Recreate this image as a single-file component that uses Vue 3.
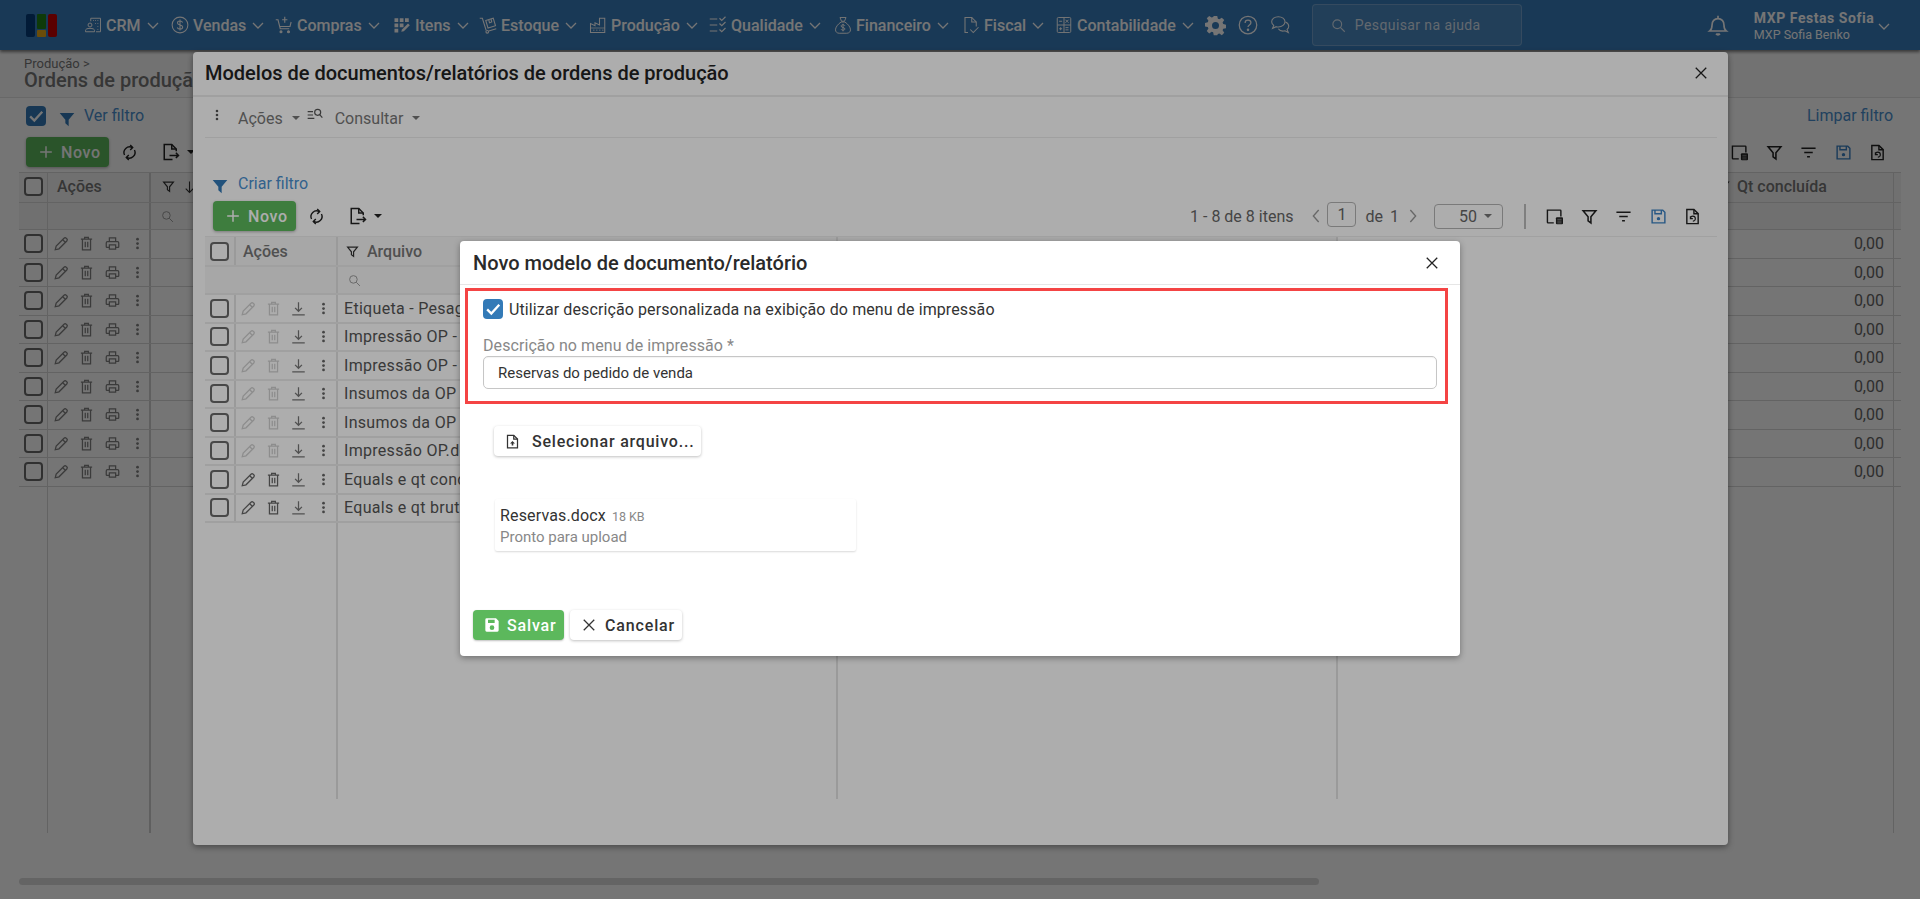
<script setup>
const nav = [
  { label: 'CRM', icon: 'i-crm', w: 87 },
  { label: 'Vendas', icon: 'i-dollar', w: 104 },
  { label: 'Compras', icon: 'i-cart', w: 118 },
  { label: 'Itens', icon: 'i-items', w: 86 },
  { label: 'Estoque', icon: 'i-stock', w: 110 },
  { label: 'Produção', icon: 'i-factory', w: 120 },
  { label: 'Qualidade', icon: 'i-quality', w: 125 },
  { label: 'Financeiro', icon: 'i-bag', w: 128 },
  { label: 'Fiscal', icon: 'i-fiscal', w: 93 },
  { label: 'Contabilidade', icon: 'i-calc', w: 0 }
]
const backRows = Array.from({ length: 9 }, (_, i) => i)
const files = [
  { name: 'Etiqueta - Pesagem', off: true },
  { name: 'Impressão OP - Lote', off: true },
  { name: 'Impressão OP - Ordem', off: true },
  { name: 'Insumos da OP - Lote', off: true },
  { name: 'Insumos da OP - Ordem', off: true },
  { name: 'Impressão OP.docx', off: true },
  { name: 'Equals e qt concluída', off: false },
  { name: 'Equals e qt bruta', off: false }
]
const rightIcons = ['i-columns', 'i-funnel-o', 'i-sort', 'i-save-o', 'i-restore']
</script>

<template>
  <div class="app">
    <svg class="sprite" width="0" height="0" aria-hidden="true">
      <symbol id="i-crm" viewBox="0 0 24 24"><g fill="none" stroke="currentColor" stroke-width="1.3"><circle cx="8" cy="12" r="2.6"/><path d="M2 21v-1.5c0-2 2-3 6-3s6 1 6 3V21z"/><path d="M9 7V3h13v18h-6"/><path d="M12 6h1M15 6h1M18 6h1M15 10h1M18 10h1M18 14h1M18 18h1"/></g></symbol>
      <symbol id="i-dollar" viewBox="0 0 24 24"><g fill="none" stroke="currentColor" stroke-width="1.4"><circle cx="12" cy="12" r="10.5"/><path d="M15.5 8.6c-.6-1.3-1.8-2-3.5-2-2 0-3.4 1-3.4 2.6 0 3.6 7 1.8 7 5.5 0 1.6-1.5 2.7-3.6 2.7-1.8 0-3.1-.8-3.7-2.1M12 4.6v14.8"/></g></symbol>
      <symbol id="i-cart" viewBox="0 0 24 24"><g fill="none" stroke="currentColor" stroke-width="1.5"><path d="M1 5h3l3 12h12M6 14h14l1.5-6"/><path d="M13 1v8M9.5 5h7"/><circle cx="8" cy="21" r="1.3" fill="currentColor"/><circle cx="18" cy="21" r="1.3" fill="currentColor"/></g></symbol>
      <symbol id="i-items" viewBox="0 0 24 24"><g fill="currentColor"><rect x="2" y="3" width="5" height="5"/><rect x="9" y="3" width="5" height="5"/><rect x="16" y="3" width="5" height="5"/><rect x="2" y="10" width="5" height="5"/><rect x="9" y="10" width="5" height="5"/><rect x="2" y="17" width="5" height="5"/><path d="M11 21l1-3 8-8 2.4 2.4-8 8z"/></g></symbol>
      <symbol id="i-stock" viewBox="0 0 24 24"><g fill="none" stroke="currentColor" stroke-width="1.4"><path d="M1 3h3.500l5 16"/><circle cx="11" cy="21" r="1.800"/><path d="M13 20l10-3"/><path d="M9 6l10-3 3 10-10 3z"/><path d="M13 5l1 4 3-1-1-4"/></g></symbol>
      <symbol id="i-factory" viewBox="0 0 24 24"><g fill="none" stroke="currentColor" stroke-width="1.400"><path d="M2 22V10l6 3V9l6 3V3h7v19z"/><path d="M2 16h19" stroke-width="1"/><path d="M6 19h1M10 19h1M14 19h1M18 19h1" stroke-width="2"/></g></symbol>
      <symbol id="i-quality" viewBox="0 0 24 24"><g fill="none" stroke="currentColor" stroke-width="1.500"><path d="M1 4h10M1 12h10M1 20h10"/><path d="M14 3l3 3 5-5M14 10l3 3 5-5M14 18l3 3 5-5"/></g></symbol>
      <symbol id="i-bag" viewBox="0 0 24 24"><g fill="none" stroke="currentColor" stroke-width="1.300"><path d="M8 2h8l-2 5h-4z"/><path d="M9.500 8h5"/><path d="M9.500 8C5 11 2 15 2 18.500 2 21 4 23 7 23h10c3 0 5-2 5-4.500C22 15 19 11 14.500 8"/><path d="M14.500 13c-.5-1-1.500-1.400-2.500-1.400-1.500 0-2.500.7-2.500 1.800 0 2.500 5 1.400 5 3.800 0 1.100-1 1.800-2.500 1.800-1.200 0-2.200-.5-2.600-1.400M12 10.500v10"/></g></symbol>
      <symbol id="i-fiscal" viewBox="0 0 24 24"><g fill="none" stroke="currentColor" stroke-width="1.400"><path d="M8 22H4V2h9l6 6v6"/><path d="M13 2v6h6"/><path d="M11 18l4 4 7-7"/></g></symbol>
      <symbol id="i-calc" viewBox="0 0 24 24"><g fill="none" stroke="currentColor" stroke-width="1.300"><rect x="3" y="2" width="18" height="20" rx="1.500"/><path d="M12 2v20M3 12h18"/><path d="M5.500 7h4M14 5l4 4M18 5l-4 4M5.500 17h4M7.500 15v4M14 15.500h4M14 18.500h4"/></g></symbol>
      <symbol id="i-gear" viewBox="0 0 24 24"><path fill="currentColor" fill-rule="evenodd" d="M10 1h4l.7 3.200 1.700.7L19.200 3l2.800 2.800-1.900 2.800.7 1.700 3.200.7v4l-3.200.7-.7 1.700 1.900 2.800-2.800 2.800-2.800-1.900-1.700.7L14 23h-4l-.7-3.200-1.700-.7L4.800 21 2 18.200l1.900-2.800-.7-1.700L0 13V9l3.200-.7.7-1.700L2 3.800 4.800 1l2.800 1.900 1.700-.7zM12 8a4 4 0 1 0 0 8 4 4 0 0 0 0-8z"/></symbol>
      <symbol id="i-help" viewBox="0 0 24 24"><g fill="none" stroke="currentColor" stroke-width="1.500"><circle cx="12" cy="12" r="10.500"/><path d="M8.500 9.500c0-2 1.500-3.300 3.500-3.300s3.500 1.300 3.500 3c0 2.800-3.500 2.600-3.500 5.300"/><circle cx="12" cy="17.800" r=".8" fill="currentColor"/></g></symbol>
      <symbol id="i-chat" viewBox="0 0 24 24"><g fill="none" stroke="currentColor" stroke-width="1.300"><path d="M10 2c-4.500 0-8 2.700-8 6 0 1.800 1 3.300 2.500 4.400L3 16l4.500-2c.8.200 1.600.3 2.500.3 4.500 0 8-2.800 8-6.300s-3.500-6-8-6z"/><path d="M18.500 8.500c2.500 1 4 2.800 4 5 0 1.500-.8 2.900-2 3.900L22 21l-4-2c-3 .7-6.500-.2-8-2.500"/></g></symbol>
      <symbol id="i-search" viewBox="0 0 24 24"><g fill="none" stroke="currentColor" stroke-width="1.800"><circle cx="10" cy="10" r="7"/><path d="M15.300 15.300L22 22"/></g></symbol>
      <symbol id="i-bell" viewBox="0 0 24 24"><g fill="none" stroke="currentColor" stroke-width="1.800"><path d="M3 18.500h18c-2-1.500-2.500-3-2.500-6.500 0-4-2.500-7-6.500-7s-6.500 3-6.500 7c0 3.500-.5 5-2.500 6.500z"/><path d="M12 2v3"/><path d="M10 21.500c.5.700 1.200 1 2 1s1.500-.3 2-1" stroke-width="2.200"/></g></symbol>
      <symbol id="i-chev" viewBox="0 0 14 14"><path d="M2 5l5 5 5-5" fill="none" stroke="currentColor" stroke-width="1.300"/></symbol>
      <symbol id="i-funnel" viewBox="0 0 24 24"><path fill="currentColor" d="M1 3h22l-8.500 10v10L9.500 18.500V13z"/></symbol>
      <symbol id="i-funnel-o" viewBox="0 0 24 24"><path fill="none" stroke="currentColor" stroke-width="2.200" d="M3 4h18l-7 8.500V21l-4-3v-5.500z"/></symbol>
      <symbol id="i-kebab" viewBox="0 0 24 24"><g fill="currentColor"><circle cx="12" cy="5" r="2.200"/><circle cx="12" cy="12" r="2.200"/><circle cx="12" cy="19" r="2.200"/></g></symbol>
      <symbol id="i-consult" viewBox="0 0 24 24"><g fill="none" stroke="currentColor" stroke-width="1.800"><path d="M1 7h8M1 12h8M1 17h10"/><circle cx="16" cy="8" r="4.500"/><path d="M19 11.500l4 4.500"/></g></symbol>
      <symbol id="i-refresh" viewBox="0 0 24 24"><g fill="none" stroke="currentColor" stroke-width="2"><path d="M5 15.500A8 8 0 0 1 16 5"/><path d="M19 8.500A8 8 0 0 1 8 19"/><path d="M13 1.500l3.500 3.500L13 8.500M11 15.500L7.500 19l3.500 3.500"/></g></symbol>
      <symbol id="i-export" viewBox="0 0 24 24"><g fill="none" stroke="currentColor" stroke-width="2"><path d="M14 22H3V2h10l6 6v3"/><path d="M13 2v6h6"/><path d="M10 16.500h12M18.500 13l3.500 3.500-3.500 3.500"/></g></symbol>
      <symbol id="i-columns" viewBox="0 0 24 24"><g fill="none" stroke="currentColor" stroke-width="2"><path d="M11 21H3a1 1 0 0 1-1-1V3h18a1 1 0 0 1 1 1v8"/></g><rect x="14" y="13" width="10" height="10" rx="1.500" fill="currentColor"/><path d="M16 16h6M16 18.500h6M16 21h6" stroke="#a5a5a5" stroke-width="1"/></symbol>
      <symbol id="i-sort" viewBox="0 0 24 24"><g fill="none" stroke="currentColor" stroke-width="2.200"><path d="M2 6h20M6 12h12M10 18h4"/></g></symbol>
      <symbol id="i-save-o" viewBox="0 0 24 24"><path fill="none" stroke="currentColor" stroke-width="2" d="M3 3h15l3 3v15H3zM7 3v5h9V3"/><circle cx="12" cy="15" r="2.400" fill="currentColor"/></symbol>
      <symbol id="i-save" viewBox="0 0 24 24"><path fill="currentColor" fill-rule="evenodd" d="M2 4a2 2 0 0 1 2-2h14l4 4v14a2 2 0 0 1-2 2H4a2 2 0 0 1-2-2zM6 4v5h10V4zM12 12.500a3.500 3.500 0 1 0 0 7 3.500 3.500 0 0 0 0-7z"/></symbol>
      <symbol id="i-restore" viewBox="0 0 24 24"><g fill="none" stroke="currentColor" stroke-width="2"><path d="M4 2h10l6 6v14H4z"/><path d="M14 2v6h6"/><path d="M9 15a3.500 3.500 0 1 1 3.500 3.500M9 11.500V15h3.500" stroke-width="1.600"/></g></symbol>
      <symbol id="i-pencil" viewBox="0 0 24 24"><g fill="none" stroke="currentColor" stroke-width="2"><path d="M2 22l1.500-6L16 3.500a2.500 2.500 0 0 1 3.500 0l1 1a2.500 2.500 0 0 1 0 3.500L8 20.500z"/><path d="M14 6l4.500 4.500"/></g></symbol>
      <symbol id="i-trash" viewBox="0 0 24 24"><g fill="none" stroke="currentColor" stroke-width="2"><path d="M3 5h18M9 5V2h6v3M5.500 5v17h13V5"/><path d="M10 9v9M14 9v9"/></g></symbol>
      <symbol id="i-print" viewBox="0 0 24 24"><g fill="none" stroke="currentColor" stroke-width="2"><path d="M7 9V3h10v6"/><path d="M7 18H3a1 1 0 0 1-1-1v-6a2 2 0 0 1 2-2h16a2 2 0 0 1 2 2v6a1 1 0 0 1-1 1h-4"/><path d="M7 14h10v7H7z"/></g></symbol>
      <symbol id="i-download" viewBox="0 0 24 24"><g fill="none" stroke="currentColor" stroke-width="2"><path d="M12 2v14M6.500 11l5.500 5.500 5.500-5.500M2 22h20"/></g></symbol>
      <symbol id="i-arrow-down" viewBox="0 0 24 24"><path d="M12 2v20M5 15l7 7 7-7" fill="none" stroke="currentColor" stroke-width="2"/></symbol>
      <symbol id="i-close" viewBox="0 0 24 24"><path d="M3 3l18 18M21 3L3 21" fill="none" stroke="currentColor" stroke-width="2.200"/></symbol>
      <symbol id="i-left" viewBox="0 0 14 24"><path d="M11 3L3 12l8 9" fill="none" stroke="currentColor" stroke-width="2"/></symbol>
      <symbol id="i-right" viewBox="0 0 14 24"><path d="M3 3l8 9-8 9" fill="none" stroke="currentColor" stroke-width="2"/></symbol>
      <symbol id="i-plus" viewBox="0 0 24 24"><path d="M12 2v20M2 12h20" fill="none" stroke="currentColor" stroke-width="2.600"/></symbol>
      <symbol id="i-upload" viewBox="0 0 24 24"><g fill="none" stroke="currentColor" stroke-width="2"><path d="M4 2h10l6 6v14H4z"/><path d="M14 2v6h6"/></g><path d="M12 11l-4 4h2.700v3.500h2.600V15H16z" fill="currentColor"/></symbol>
      <symbol id="i-check" viewBox="0 0 24 24"><path d="M5 12.500l5 5L19.500 7" fill="none" stroke="currentColor" stroke-width="2.800"/></symbol>
    </svg>

    <header class="topbar">
      <div class="logo">
        <span class="bar navy"></span>
        <span class="bar stacked"><i class="green"></i><i class="gold"></i></span>
        <span class="bar red"></span>
      </div>
      <nav class="nav">
        <a v-for="n in nav" :key="n.label" class="nav-item" :style="n.w ? { width: n.w + 'px' } : null">
          <svg class="nav-icon"><use :href="'#' + n.icon" /></svg>
          <span>{{ n.label }}</span>
          <svg class="nav-chev"><use href="#i-chev" /></svg>
        </a>
      </nav>
      <div class="nav-tools">
        <svg class="tool gear"><use href="#i-gear" /></svg>
        <svg class="tool"><use href="#i-help" /></svg>
        <svg class="tool"><use href="#i-chat" /></svg>
      </div>
      <div class="help-search">
        <svg class="help-search-icon"><use href="#i-search" /></svg>
        <span>Pesquisar na ajuda</span>
      </div>
      <svg class="bell"><use href="#i-bell" /></svg>
      <div class="user">
        <strong>MXP Festas Sofia</strong>
        <span>MXP Sofia Benko</span>
      </div>
      <svg class="user-chev"><use href="#i-chev" /></svg>
    </header>

    <section class="page-head">
      <div class="crumb">Produção &gt;</div>
      <h1>Ordens de produção</h1>
    </section>

    <section class="filter-line">
      <span class="check on"><svg><use href="#i-check" /></svg></span>
      <svg class="funnel"><use href="#i-funnel" /></svg>
      <a class="link">Ver filtro</a>
      <a class="link right">Limpar filtro</a>
    </section>

    <section class="actions back-actions">
      <button class="btn-new"><svg><use href="#i-plus" /></svg>Novo</button>
      <svg class="act-icon refresh"><use href="#i-refresh" /></svg>
      <svg class="act-icon export"><use href="#i-export" /></svg>
      <i class="caret dark"></i>
      <div class="right-icons">
        <svg v-for="ic in rightIcons" :key="ic" class="act-icon" :class="{ blue: ic === 'i-save-o' }"><use :href="'#' + ic" /></svg>
      </div>
    </section>

    <section class="back-table">
      <div class="brow head">
        <div class="cell"><span class="check"></span></div>
        <div class="cell title-cell">Ações</div>
        <div class="cell icons-cell"><svg class="mini"><use href="#i-funnel-o" /></svg><svg class="mini arrow"><use href="#i-arrow-down" /></svg></div>
        <div class="cell qt"><svg class="mini"><use href="#i-funnel-o" /></svg><span>Qt concluída</span></div>
        <div class="cell"></div>
      </div>
      <div class="brow filter">
        <div class="cell"></div>
        <div class="cell"></div>
        <div class="cell"><svg class="mini search"><use href="#i-search" /></svg></div>
        <div class="cell"></div>
        <div class="cell"></div>
      </div>
      <div v-for="r in backRows" :key="r" class="brow item">
        <div class="cell"><span class="check"></span></div>
        <div class="cell row-icons">
          <svg><use href="#i-pencil" /></svg>
          <svg><use href="#i-trash" /></svg>
          <svg><use href="#i-print" /></svg>
          <svg><use href="#i-kebab" /></svg>
        </div>
        <div class="cell"></div>
        <div class="cell num">0,00</div>
        <div class="cell"></div>
      </div>
      <div class="brow fill">
        <div class="cell"></div>
        <div class="cell"></div>
        <div class="cell"></div>
        <div class="cell"></div>
        <div class="cell"></div>
      </div>
    </section>

    <div class="scrollbar"></div>

    <div class="scrim"></div>

    <section class="modal">
      <header class="modal-head">
        <h2>Modelos de documentos/relatórios de ordens de produção</h2>
        <svg class="close"><use href="#i-close" /></svg>
      </header>
      <div class="modal-body">
        <div class="menu-line">
          <svg class="menu-kebab"><use href="#i-kebab" /></svg>
          <span class="menu-text acoes">Ações</span><i class="caret wide"></i>
          <svg class="menu-consult"><use href="#i-consult" /></svg>
          <span class="menu-text consult">Consultar</span><i class="caret wide"></i>
        </div>
        <div class="create-filter">
          <svg class="funnel"><use href="#i-funnel" /></svg>
          <a class="link">Criar filtro</a>
        </div>
        <div class="actions modal-actions">
          <button class="btn-new"><svg><use href="#i-plus" /></svg>Novo</button>
          <svg class="act-icon refresh"><use href="#i-refresh" /></svg>
          <svg class="act-icon export"><use href="#i-export" /></svg>
          <i class="caret dark"></i>
          <div class="pager">
            <span class="count">1 - 8 de 8 itens</span>
            <svg class="pg-chev"><use href="#i-left" /></svg>
            <span class="pg-input">1</span>
            <span class="pg-de">de</span>
            <span class="pg-total">1</span>
            <svg class="pg-chev"><use href="#i-right" /></svg>
            <span class="pg-select"><span>50</span><i class="caret"></i></span>
            <span class="pg-sep"></span>
          </div>
          <div class="right-icons">
            <svg v-for="ic in rightIcons" :key="ic" class="act-icon" :class="{ blue: ic === 'i-save-o' }"><use :href="'#' + ic" /></svg>
          </div>
        </div>
        <div class="modal-table">
          <div class="mrow head">
            <div class="cell"><span class="check"></span></div>
            <div class="cell title-cell">Ações</div>
            <div class="cell icons-cell"><svg class="mini"><use href="#i-funnel-o" /></svg><span class="arquivo">Arquivo</span></div>
            <div class="cell"></div>
          </div>
          <div class="mrow filter">
            <div class="cell"></div>
            <div class="cell"></div>
            <div class="cell"><svg class="mini search"><use href="#i-search" /></svg></div>
            <div class="cell"></div>
          </div>
          <div v-for="f in files" :key="f.name" class="mrow item">
            <div class="cell"><span class="check"></span></div>
            <div class="cell row-icons">
              <svg :class="{ off: f.off }"><use href="#i-pencil" /></svg>
              <svg :class="{ off: f.off }"><use href="#i-trash" /></svg>
              <svg class="strong"><use href="#i-download" /></svg>
              <svg><use href="#i-kebab" /></svg>
            </div>
            <div class="cell file">{{ f.name }}</div>
            <div class="cell"></div>
          </div>
          <div class="mrow fill">
            <div class="cell"></div>
            <div class="cell"></div>
            <div class="cell"></div>
            <div class="cell"></div>
          </div>
        </div>
      </div>
    </section>

    <div class="scrim"></div>

    <section class="dialog">
      <header class="dialog-head">
        <h3>Novo modelo de documento/relatório</h3>
        <svg class="close"><use href="#i-close" /></svg>
      </header>
      <div class="dialog-body">
        <label class="custom-line">
          <span class="check on"><svg><use href="#i-check" /></svg></span>
          <span>Utilizar descrição personalizada na exibição do menu de impressão</span>
        </label>
        <div class="field-label">Descrição no menu de impressão *</div>
        <div class="field-input">Reservas do pedido de venda</div>
        <button class="btn-select"><svg><use href="#i-upload" /></svg>Selecionar arquivo...</button>
        <div class="file-card">
          <div><span class="file-name">Reservas.docx</span><span class="file-size">18 KB</span></div>
          <div class="file-state">Pronto para upload</div>
        </div>
      </div>
      <footer class="dialog-foot">
        <button class="btn-save"><svg><use href="#i-save" /></svg>Salvar</button>
        <button class="btn-cancel"><svg><use href="#i-close" /></svg>Cancelar</button>
      </footer>
      <div class="highlight"></div>
    </section>
  </div>
</template>

<style>
html, body { margin: 0; padding: 0; background: #fff; }
</style>

<style scoped>
.app {
  position: relative;
  width: 1920px;
  height: 899px;
  overflow: hidden;
  background: #fff;
  color: #666;
  font-family: Roboto, "Liberation Sans", sans-serif;
  font-size: 16px;
}
.sprite { position: absolute; }
h1, h2, h3 { margin: 0; font-weight: 500; }
button { font-family: inherit; border: 0; padding: 0; cursor: pointer; }

/* top bar */
.topbar {
  display: flex;
  align-items: center;
  height: 50px;
  padding-left: 26px;
  background: #387dbc;
  color: #fff;
  box-shadow: 0 2px 3px rgba(0, 0, 0, .5);
  position: relative;
}
.logo { display: flex; gap: 2px; width: 31px; height: 23px; margin-right: 27px; margin-top: 1px; }
.bar { width: 9px; border-radius: 2px; display: flex; flex-direction: column; gap: 1px; }
.navy { background: #053d79; }
.red { background: #c80000; }
.stacked i { display: block; border-radius: 1px; }
.green { height: 15px; background: #207f15; }
.gold { height: 7px; background: #e8a515; }
.nav { display: flex; align-items: center; }
.nav-item { display: flex; align-items: center; font-weight: 500; white-space: nowrap; }
.nav-icon { width: 18px; height: 18px; margin-right: 4px; flex: none; }
.nav-chev { width: 14px; height: 14px; margin-left: 5px; flex: none; }
.nav-tools { display: flex; align-items: center; gap: 12px; margin-left: 10px; }
.tool { width: 20px; height: 20px; }
.gear { width: 21px; height: 21px; }
.help-search {
  display: flex;
  align-items: center;
  box-sizing: border-box;
  width: 210px;
  height: 42px;
  margin-left: 22px;
  padding-left: 18px;
  border: 1px solid rgba(255, 255, 255, .22);
  border-radius: 4px;
  background: rgba(255, 255, 255, .1);
  color: rgba(255, 255, 255, .78);
  font-size: 14px;
  letter-spacing: .4px;
}
.help-search-icon { width: 15px; height: 15px; margin-right: 9px; }
.bell { width: 22px; height: 24px; margin-left: 185px; }
.user { display: flex; flex-direction: column; margin-left: 25px; margin-top: 3px; }
.user strong { font-size: 14px; line-height: 15px; font-weight: 700; letter-spacing: .55px; }
.user span { font-size: 12.500px; line-height: 17px; }
.user-chev { width: 14px; height: 14px; margin-left: 3px; margin-top: 2px; }

/* page */
.page-head {
  box-sizing: border-box;
  height: 48px;
  padding: 6px 0 0 24px;
  border-bottom: 1px solid #e3e3e3;
  background: #fafafa;
}
.crumb { font-size: 13px; line-height: 15px; color: #777; }
h1 { font-size: 20px; line-height: 18px; color: #777; }
.filter-line { display: flex; align-items: center; height: 32px; padding: 4px 27px 0 26px; box-sizing: border-box; }
.check {
  display: inline-block;
  box-sizing: border-box;
  width: 19px;
  height: 19px;
  border: 2px solid #6b6b6b;
  border-radius: 4px;
  background: #fff;
  flex: none;
}
.check.on { width: 20px; height: 20px; border: 0; background: #337ab7; color: #fff; display: flex; }
.check.on svg { width: 20px; height: 20px; }
.funnel { width: 16px; height: 16px; color: #337ab7; }
.filter-line .funnel { margin: 6px 0 0 13px; }
.link { color: #4a90cf; font-size: 16px; white-space: nowrap; }
.filter-line .link { margin: -1px 0 0 9px; }
.filter-line .link.right { margin-left: auto; }

.actions { display: flex; align-items: center; height: 30px; }
.back-actions { margin: 7px 0 0 26px; padding-right: 34px; }
.btn-new {
  display: flex;
  align-items: center;
  box-sizing: border-box;
  width: 83px;
  height: 30px;
  padding-left: 13px;
  border-radius: 4px;
  background: #5cb85c;
  color: #fff;
  font-size: 16px;
  font-weight: 500;
  letter-spacing: .6px;
  box-shadow: 0 1px 3px rgba(0, 0, 0, .3);
  flex: none;
}
.btn-new svg { width: 14px; height: 14px; margin-right: 8px; }
.act-icon { width: 17px; height: 17px; color: #222; flex: none; }
.refresh { margin-left: 12px; }
.export { margin-left: 24px; width: 18px; height: 18px; }
.caret {
  display: inline-block;
  width: 0;
  height: 0;
  margin-left: 7px;
  border: 4px solid transparent;
  border-top-color: #777;
  border-bottom: 0;
  flex: none;
}
.caret.dark { border-top-color: #222; }
.caret.wide { margin-left: 9px; }
.right-icons { display: flex; gap: 17.500px; margin-left: auto; }
.blue { color: #3b82c4; }

/* back table */
.back-table { margin: 5px 19px 0 19px; display: flex; flex-direction: column; height: 660px; border-top: 1px solid #d8d8d8; }
.brow { display: grid; grid-template-columns: 29px 102px 1550px 194px 7px; box-sizing: border-box; border-bottom: 1px solid #d8d8d8; }
.brow .cell { border-right: 1px solid #d8d8d8; display: flex; align-items: center; box-sizing: border-box; }
.brow .cell:nth-child(2) { border-right: 1px solid #d0d0d0; }
.brow .cell:nth-child(3) { border-right: 0; border-left: 1px solid #cfcfcf; }
.brow .cell:nth-child(5) { border-right: 0; }
.brow .cell:first-child { padding-left: 5px; }
.brow.head { height: 30px; background: #f5f5f5; }
.brow.head .cell { padding-bottom: 2px; }
.brow.filter { height: 27px; background: #f5f5f5; }
.brow.item { height: 28.500px; }
.brow.fill { flex: 1; border-bottom: 0; }
.title-cell { padding-left: 9px; font-weight: 500; color: #777; }
.icons-cell { padding-left: 11px; }
.mini { width: 13px; height: 13px; color: #333; flex: none; }
.mini.search { margin-left: 10px; color: #999; }
.mini.arrow { margin-left: 8px; height: 16px; }
.brow .qt { padding-left: 17px; font-weight: 500; color: #777; }
.brow .qt .mini { margin-right: 7px; }
.num { justify-content: flex-end; padding-right: 9px; color: #666; }
.row-icons { gap: 10.300px; padding-left: 6px; }
.row-icons svg { width: 15px; height: 15px; color: #808080; flex: none; }

.scrollbar { position: absolute; left: 19px; top: 878px; width: 1300px; height: 7px; border-radius: 4px; background: #dbdbdb; }
.scrim { position: absolute; inset: 0; background: rgba(0, 0, 0, .32); }

/* modal */
.modal {
  position: absolute;
  left: 193px;
  top: 52px;
  box-sizing: border-box;
  width: 1535px;
  height: 793px;
  border-radius: 4px;
  background: #fff;
  box-shadow: 0 2px 6px rgba(0, 0, 0, .4);
  color: #555;
}
.modal-head {
  display: flex;
  align-items: center;
  justify-content: space-between;
  box-sizing: border-box;
  height: 45px;
  padding: 0 20px 2px 12px;
  border-bottom: 2px solid #ececec;
}
h2 { font-size: 20px; color: #222; }
.close { width: 14px; height: 14px; color: #222; flex: none; }
.modal-body { padding: 0 11px 0 12px; }
.menu-line {
  display: flex;
  align-items: center;
  height: 41px;
  padding-top: 2px;
  box-sizing: border-box;
  border-bottom: 1px solid #ececec;
  color: #777;
}
.menu-kebab { width: 14px; height: 14px; margin: -7px 0 0 5px; color: #555; }
.menu-text { font-size: 16px; }
.acoes { margin-left: 14px; }
.menu-consult { width: 16px; height: 16px; margin: -7px 0 0 7px; color: #555; }
.consult { margin-left: 12px; }
.create-filter { display: flex; align-items: center; height: 34px; margin-top: 29px; padding-left: 7px; }
.create-filter .funnel { margin-top: 3px; }
.create-filter .link { margin: -2px 0 0 10px; }
.modal-actions { padding-left: 8px; padding-right: 16px; }
.modal-actions .right-icons { margin-left: 0; }
.pager { display: flex; align-items: center; margin-left: auto; margin-right: 20px; color: #666; }
.count { margin-right: 18px; }
.pg-chev { width: 10px; height: 16px; color: #999; }
.pg-input {
  box-sizing: border-box;
  width: 29px;
  height: 25px;
  margin: -3px 9px 0 6px;
  border: 1px solid #b4b4b4;
  border-radius: 4px;
  text-align: center;
  line-height: 23px;
}
.pg-de { margin-right: 7px; }
.pg-total { margin-right: 9px; }
.pg-select {
  display: flex;
  align-items: center;
  justify-content: flex-end;
  box-sizing: border-box;
  width: 69px;
  height: 25px;
  margin-left: 16px;
  padding-right: 10px;
  border: 1px solid #b4b4b4;
  border-radius: 4px;
}
.pg-sep { width: 2px; height: 25px; margin-left: 21px; background: #bbb; }

.modal-table { display: flex; flex-direction: column; height: 562px; margin-top: 5px; border-top: 1px solid #eee; }
.mrow { display: grid; grid-template-columns: 29px 104px 500px 500px; box-sizing: border-box; width: 1133px; border-bottom: 2px solid #ececec; }
.mrow .cell { display: flex; align-items: center; box-sizing: border-box; border-right: 2px solid #e4e4e4; }
.mrow .cell:first-child { padding-left: 5px; border-right: 0; }
.mrow.head { height: 30px; background: #f6f6f6; }
.mrow.filter { height: 28px; background: #f6f6f6; }
.mrow.item { height: 28.500px; }
.mrow.fill { flex: 1; border-bottom: 0; }
.arquivo { margin-left: 8px; font-weight: 500; color: #777; }
.mrow .icons-cell { padding-left: 8px; }
.mrow .title-cell { border-left: 2px solid #e4e4e4; padding-left: 7px; }
.mrow .row-icons { border-left: 2px solid #e4e4e4; padding-left: 5px; gap: 10px; }
.mrow .row-icons svg { color: #666; }
.mrow .row-icons svg.off { color: #d0d0d0; }
.mrow .row-icons svg.strong { color: #777; }
.file { padding-left: 6px; white-space: nowrap; overflow: hidden; color: #555; letter-spacing: .3px; }

/* dialog */
.dialog {
  position: absolute;
  left: 460px;
  top: 241px;
  display: flex;
  flex-direction: column;
  box-sizing: border-box;
  width: 1000px;
  height: 415px;
  border-radius: 4px;
  background: #fff;
  box-shadow: 0 2px 6px rgba(0, 0, 0, .35);
  color: #333;
}
.dialog-head {
  display: flex;
  align-items: center;
  justify-content: space-between;
  box-sizing: border-box;
  height: 44px;
  padding: 0 21px 0 13px;
  border-bottom: 1px solid #e6e6e6;
}
h3 { font-size: 20px; color: #2a2a2a; }
.dialog-body { flex: 1; padding: 14px 23px 0; }
.custom-line { display: flex; align-items: center; gap: 6px; height: 20px; color: #333; letter-spacing: .11px; }
.field-label { margin-top: 18px; color: #888; line-height: 18px; letter-spacing: .08px; }
.field-input {
  box-sizing: border-box;
  height: 33px;
  margin-top: 1px;
  padding-left: 14px;
  border: 1px solid #c6c6c6;
  border-radius: 5px;
  font-size: 15px;
  line-height: 33px;
  color: #333;
  box-shadow: inset 0 1px 1px rgba(0, 0, 0, .05);
}
.btn-select {
  display: flex;
  align-items: center;
  width: 207px;
  height: 30px;
  margin: 37px 0 0 11px;
  padding: 0 0 0 11px;
  border-radius: 4px;
  background: #fff;
  color: #333;
  font-size: 16px;
  font-weight: 500;
  letter-spacing: .78px;
  box-shadow: 0 1px 3px rgba(0, 0, 0, .25);
}
.btn-select svg { width: 15px; height: 15px; margin-right: 12px; }
.file-card {
  box-sizing: border-box;
  width: 361px;
  height: 52px;
  margin: 43px 0 0 12px;
  padding: 6px 5px 0;
  box-shadow: 0 1px 2px rgba(0, 0, 0, .15);
  border-radius: 2px;
  line-height: 21px;
}
.file-name { color: #333; font-weight: 400; letter-spacing: .15px; }
.file-size { margin-left: 6px; font-size: 12.500px; color: #888; }
.file-state { font-size: 15px; color: #888; }
.dialog-foot { display: flex; gap: 6px; height: 46px; padding-left: 13px; }
.btn-save, .btn-cancel {
  display: flex;
  align-items: center;
  height: 30px;
  border-radius: 4px;
  font-size: 16px;
  font-weight: 500;
  letter-spacing: .85px;
}
.btn-save { width: 91px; padding-left: 11px; background: #5cb85c; color: #fff; box-shadow: 0 1px 2px rgba(0, 0, 0, .25); }
.btn-save svg { width: 16px; height: 16px; margin-right: 7px; }
.btn-cancel { width: 112px; padding-left: 12px; background: #fff; color: #333; box-shadow: 0 1px 3px rgba(0, 0, 0, .25); }
.btn-cancel svg { width: 14px; height: 14px; margin-right: 9px; }
.highlight {
  position: absolute;
  left: 5px;
  top: 47px;
  box-sizing: border-box;
  width: 983px;
  height: 116px;
  border: 3px solid #f44444;
  pointer-events: none;
}
</style>
